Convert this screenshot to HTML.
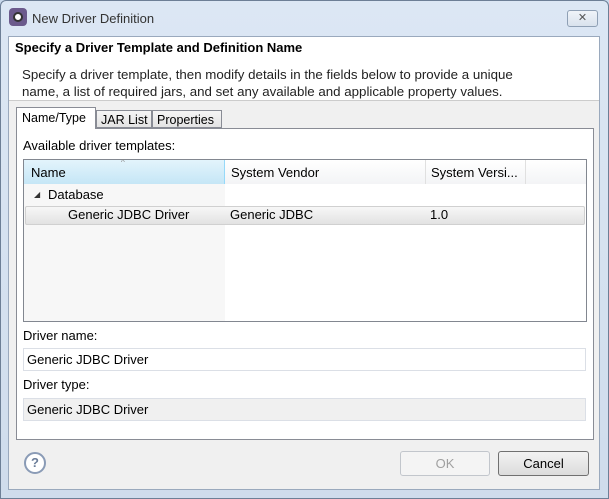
<!DOCTYPE html>
<html><head><style>
*{box-sizing:border-box;margin:0;padding:0}
body{width:609px;height:499px;overflow:hidden;background:#c9d9ec;font-family:"Liberation Sans",sans-serif;font-size:13px;color:#000;position:relative}
.a{position:absolute;white-space:nowrap}
</style></head><body>
<div class="a" style="left:0;top:0;width:609px;height:499px;background:linear-gradient(#dce7f4,#cfdcec);border:1px solid #6d7f96;border-radius:6px 6px 0 0"></div>
<div class="a" style="left:9px;top:8px;width:18px;height:18px;border-radius:4px;background:#6b5a8c"></div>
<div class="a" style="left:13px;top:12px;width:10px;height:10px;border-radius:50%;background:#fff;border:2px solid #333"></div>
<div class="a" style="left:32px;top:11px;color:#333;font-size:13px">New Driver Definition</div>
<div class="a" style="left:567px;top:10px;width:31px;height:17px;border:1px solid #8fa0b5;border-radius:3px;background:linear-gradient(#f0f4f9,#d9e2ed);text-align:center;font-size:11px;color:#555;line-height:15px">✕</div>
<div class="a" style="left:8px;top:36px;width:592px;height:454px;background:#f0f0f0;border:1px solid #9aa9bd"></div>
<div class="a" style="left:9px;top:37px;width:590px;height:64px;background:#fff;border-bottom:1px solid #ccc"></div>
<div class="a" style="left:15px;top:40px;font-weight:bold;font-size:13px">Specify a Driver Template and Definition Name</div>
<div class="a" style="left:22px;top:66px;font-size:13.3px;line-height:17px;color:#222">Specify a driver template, then modify details in the fields below to provide a unique<br>name, a list of required jars, and set any available and applicable property values.</div>
<div class="a" style="left:16px;top:128px;width:578px;height:312px;background:#fff;border:1px solid #898c95"></div>
<div class="a" style="left:16px;top:107px;width:80px;height:22px;background:#fff;border:1px solid #898c95;border-bottom:none;padding:3px 0 0 5px;font-size:12.5px">Name/Type</div>
<div class="a" style="left:96px;top:110px;width:56px;height:18px;background:linear-gradient(#f5f5f5,#e3e3e3);border:1px solid #898c95;padding:2px 0 0 4px;font-size:12.5px">JAR List</div>
<div class="a" style="left:152px;top:110px;width:70px;height:18px;background:linear-gradient(#f5f5f5,#e3e3e3);border:1px solid #898c95;padding:2px 0 0 4px;font-size:12.5px">Properties</div>
<div class="a" style="left:23px;top:138px">Available driver templates:</div>
<div class="a" style="left:23px;top:159px;width:564px;height:163px;border:1px solid #828790;background:#fff"></div>
<div class="a" style="left:24px;top:160px;width:201px;height:161px;background:#f7f7f7"></div>
<div class="a" style="left:24px;top:160px;width:562px;height:24px;background:linear-gradient(#fff,#f3f4f6)"></div>
<div class="a" style="left:24px;top:160px;width:201px;height:24px;background:linear-gradient(#e3f4fc,#c5e6f6);border-right:1px solid #96d9f9"></div>
<div class="a" style="left:425px;top:160px;width:1px;height:24px;background:#e0e0e0"></div>
<div class="a" style="left:525px;top:160px;width:1px;height:24px;background:#e0e0e0"></div>
<div class="a" style="left:121px;top:158px;font-size:8px;color:#888">^</div>
<div class="a" style="left:31px;top:165px">Name</div>
<div class="a" style="left:231px;top:165px">System Vendor</div>
<div class="a" style="left:431px;top:165px">System Versi...</div>
<div class="a" style="left:34px;top:190px;font-size:8px;color:#333">◢</div>
<div class="a" style="left:48px;top:187px">Database</div>
<div class="a" style="left:25px;top:206px;width:560px;height:19px;background:linear-gradient(#f7f7f7,#e2e2e2);border:1px solid #d0d0d0;border-radius:2px"></div>
<div class="a" style="left:68px;top:207px">Generic JDBC Driver</div>
<div class="a" style="left:230px;top:207px">Generic JDBC</div>
<div class="a" style="left:430px;top:207px">1.0</div>
<div class="a" style="left:23px;top:328px">Driver name:</div>
<div class="a" style="left:23px;top:348px;width:563px;height:23px;border:1px solid #dbdfe6;background:#fff;padding:3px 0 0 3px">Generic JDBC Driver</div>
<div class="a" style="left:23px;top:377px">Driver type:</div>
<div class="a" style="left:23px;top:398px;width:563px;height:23px;border:1px solid #dbdfe6;background:#f0f0f0;padding:3px 0 0 3px">Generic JDBC Driver</div>
<div class="a" style="left:24px;top:452px;width:22px;height:22px;border-radius:50%;border:2px solid #8a9bb6;background:#fff;text-align:center;font-weight:bold;color:#6b7d99;line-height:18px;font-size:13px">?</div>
<div class="a" style="left:400px;top:451px;width:90px;height:25px;border:1px solid #c2c6cc;border-radius:3px;background:#f4f4f4;text-align:center;line-height:23px;color:#a0a0a0">OK</div>
<div class="a" style="left:498px;top:451px;width:91px;height:25px;border:1px solid #707070;border-radius:3px;background:linear-gradient(#f2f2f2,#dcdcdc);text-align:center;line-height:23px">Cancel</div>
</body></html>
